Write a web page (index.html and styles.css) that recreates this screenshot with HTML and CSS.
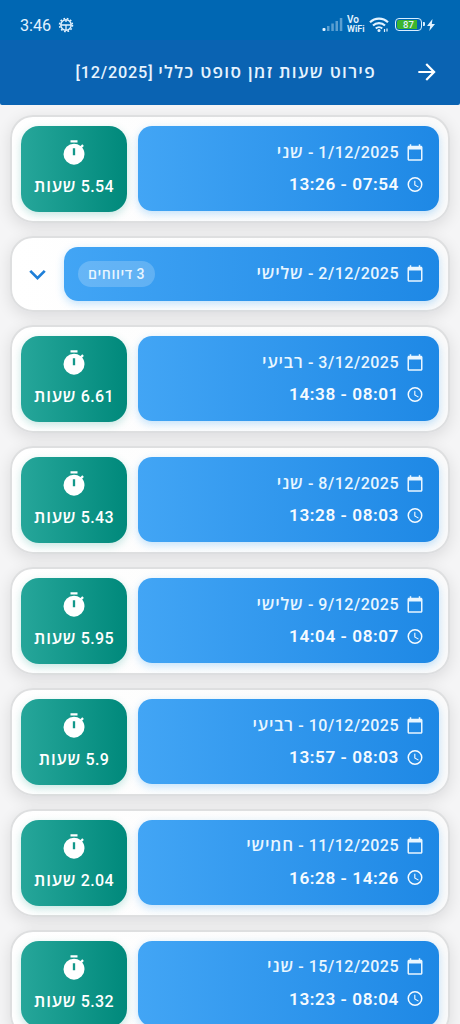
FILE: index.html
```html
<!DOCTYPE html>
<html lang="he" dir="rtl">
<head>
<meta charset="utf-8">
<title>פירוט שעות</title>
<link rel="stylesheet" href="styles.css">
</head>
<body>
<svg class="defs" width="0" height="0" aria-hidden="true">
  <symbol id="calendar" viewBox="0 0 24 24"><path fill="currentColor" d="M20 3h-1V1h-2v2H7V1H5v2H4c-1.100 0-2 .9-2 2v16c0 1.100.9 2 2 2h16c1.100 0 2-.9 2-2V5c0-1.100-.9-2-2-2zm0 18H4V8h16v13z"/></symbol>
  <symbol id="clock" viewBox="0 0 24 24"><path fill="currentColor" d="M12 2a10 10 0 1 0 0 20 10 10 0 0 0 0-20zm0 18a8 8 0 1 1 0-16 8 8 0 0 1 0 16zm.5-13H11v6l5.250 3.150.75-1.230-4.500-2.670z"/></symbol>
  <symbol id="timer" viewBox="0 0 24 24"><path fill="currentColor" d="M15 1H9v2h6V1zm4.030 6.390 1.420-1.420c-.43-.51-.9-.99-1.410-1.410l-1.420 1.420A8.960 8.960 0 0 0 12 4a9 9 0 1 0 9 9c0-2.120-.74-4.070-1.970-5.610zM13 14h-2V8h2v6z"/></symbol>
</svg>

<header class="top">
  <div class="status" dir="ltr">
    <span class="status-time">3:46</span>
    <svg class="gear" viewBox="0 0 16 16" fill="none" stroke="currentColor"><circle cx="8" cy="8" r="5.200" stroke-width="1.500"/><circle cx="8" cy="8" r="6.500" stroke-width="1.500" stroke-dasharray="1.700 1.703"/><path d="M3 8h10M8 8v5M8 3v2" stroke-width="1.300"/></svg>
    <span class="spacer"></span>
    <svg class="signal" viewBox="0 0 21 15" fill="currentColor"><rect x="0.500" y="11" width="3" height="3" rx="1"/><g opacity=".4"><rect x="5" y="9" width="2.500" height="5"/><rect x="9.300" y="6.500" width="2.500" height="7.500"/><rect x="13.500" y="4" width="2.500" height="10"/><rect x="17.800" y="1" width="2.500" height="13"/></g></svg>
    <span class="vowifi"><span>Vo</span><span>WiFi</span></span>
    <svg class="wifi" viewBox="0 0 20 16" fill="none" stroke="currentColor" stroke-width="2.100"><path d="M1 5.300a12.800 12.800 0 0 1 18 0M4 8.600a8.500 8.500 0 0 1 12 0M6.800 11.500a4.600 4.600 0 0 1 6.400 0"/><circle cx="10" cy="13.500" r="1.500" fill="currentColor" stroke="none"/><path d="M15.500 12v3M18 11.500v3" stroke-width="1.200"/></svg>
    <span class="battery"><span class="battery-level">87</span></span>
    <svg class="bolt" viewBox="0 0 8 12" fill="currentColor"><path d="M5.500 0 0 7h3.200L2.300 12 8 5H4.800z"/></svg>
  </div>
  <div class="appbar">
    <svg class="back" viewBox="0 0 24 24" fill="currentColor"><path d="m12 4-1.410 1.410L16.170 11H4v2h12.170l-5.580 5.590L12 20l8-8z"/></svg>
    <h1 class="title"><span class="he">פירוט שעות זמן סופט כללי</span> [12/2025]</h1>
  </div>
</header>

<main class="list">
  <article class="card">
    <div class="shift"><div class="row date"><svg class="icon"><use href="#calendar"/></svg><span>1/12/2025 - <span class="he">שני</span></span></div><div class="row hours"><svg class="icon"><use href="#clock"/></svg><span>07:54 - 13:26</span></div></div>
    <div class="total"><svg class="timer"><use href="#timer"/></svg><span>5.54 <span class="he">שעות</span></span></div>
  </article>
  <article class="card group">
    <div class="shift"><div class="row date"><svg class="icon"><use href="#calendar"/></svg><span>2/12/2025 - <span class="he">שלישי</span></span></div><span class="badge">3 <span class="he">דיווחים</span></span></div>
    <svg class="chevron" viewBox="0 0 24 24" fill="none" stroke="currentColor" stroke-width="2.300"><path d="m6 9 6 6 6-6"/></svg>
  </article>
  <article class="card">
    <div class="shift"><div class="row date"><svg class="icon"><use href="#calendar"/></svg><span>3/12/2025 - <span class="he">רביעי</span></span></div><div class="row hours"><svg class="icon"><use href="#clock"/></svg><span>08:01 - 14:38</span></div></div>
    <div class="total"><svg class="timer"><use href="#timer"/></svg><span>6.61 <span class="he">שעות</span></span></div>
  </article>
  <article class="card">
    <div class="shift"><div class="row date"><svg class="icon"><use href="#calendar"/></svg><span>8/12/2025 - <span class="he">שני</span></span></div><div class="row hours"><svg class="icon"><use href="#clock"/></svg><span>08:03 - 13:28</span></div></div>
    <div class="total"><svg class="timer"><use href="#timer"/></svg><span>5.43 <span class="he">שעות</span></span></div>
  </article>
  <article class="card">
    <div class="shift"><div class="row date"><svg class="icon"><use href="#calendar"/></svg><span>9/12/2025 - <span class="he">שלישי</span></span></div><div class="row hours"><svg class="icon"><use href="#clock"/></svg><span>08:07 - 14:04</span></div></div>
    <div class="total"><svg class="timer"><use href="#timer"/></svg><span>5.95 <span class="he">שעות</span></span></div>
  </article>
  <article class="card">
    <div class="shift"><div class="row date"><svg class="icon"><use href="#calendar"/></svg><span>10/12/2025 - <span class="he">רביעי</span></span></div><div class="row hours"><svg class="icon"><use href="#clock"/></svg><span>08:03 - 13:57</span></div></div>
    <div class="total"><svg class="timer"><use href="#timer"/></svg><span>5.9 <span class="he">שעות</span></span></div>
  </article>
  <article class="card">
    <div class="shift"><div class="row date"><svg class="icon"><use href="#calendar"/></svg><span>11/12/2025 - <span class="he">חמישי</span></span></div><div class="row hours"><svg class="icon"><use href="#clock"/></svg><span>14:26 - 16:28</span></div></div>
    <div class="total"><svg class="timer"><use href="#timer"/></svg><span>2.04 <span class="he">שעות</span></span></div>
  </article>
  <article class="card">
    <div class="shift"><div class="row date"><svg class="icon"><use href="#calendar"/></svg><span>15/12/2025 - <span class="he">שני</span></span></div><div class="row hours"><svg class="icon"><use href="#clock"/></svg><span>08:04 - 13:23</span></div></div>
    <div class="total"><svg class="timer"><use href="#timer"/></svg><span>5.32 <span class="he">שעות</span></span></div>
  </article>
</main>
</body>
</html>
```
FILE: styles.css
```css
* { box-sizing: border-box; }
html, body { height: 100%; }
body {
  margin: 0;
  display: flex;
  flex-direction: column;
  overflow: hidden;
  background: #f5f5f6;
  font-family: Roboto, "Open Sans", "Noto Sans", sans-serif;
  color: #fff;
}
svg { display: block; flex: none; }
.defs { position: absolute; }
.he { font-family: "Open Sans", sans-serif; font-size: 1.06em; font-weight: 600; letter-spacing: .8px; line-height: 1; }

.top { flex: none; height: 105px; background: #0a63b2; border-radius: 0 0 2px 2px; }
.status {
  height: 40px;
  padding: 9px 25px 0 20px;
  display: flex;
  align-items: center;
  background: #0067b3;
  color: #e3f3ff;
}
.status-time { font-size: 16.200px; padding-top: 1px; }
.gear { width: 16px; height: 16px; margin-left: 7px; }
.spacer { flex: 1; }
.signal { width: 21px; height: 15px; margin-right: 4px; }
.vowifi { display: flex; flex-direction: column; width: 18px; font-size: 9px; line-height: 8.500px; font-weight: 600; }
.vowifi span:first-child { font-size: 10px; }
.wifi { width: 20px; height: 16px; margin-left: 4px; }
.battery {
  position: relative;
  width: 27px;
  height: 13px;
  margin-left: 6px;
  padding: 1px;
  border: 1.500px solid #d9efff;
  border-radius: 4px;
}
.battery::after { content: ""; position: absolute; right: -4px; top: 3px; width: 2px; height: 4px; background: #d9efff; border-radius: 0 1px 1px 0; }
.battery-level { display: block; height: 9px; font-size: 9.500px; line-height: 9px; font-weight: 500; text-align: center; background: linear-gradient(90deg, #3cb52e 86%, transparent 86%); border-radius: 2px; }
.bolt { width: 8px; height: 12px; margin-left: 5px; }

.appbar { height: 65px; padding: 0 20px; display: flex; align-items: center; }
.back { width: 26px; height: 26px; margin-bottom: 1px; }
.title { margin: 0; padding: 1px 38px 0 0; font-size: 16.300px; line-height: 24px; font-weight: 500; letter-spacing: .8px; white-space: nowrap; color: #e6f4ff; }
.title .he { letter-spacing: 1.300px; }

.list {
  flex: 1;
  min-height: 0;
  padding: 10px 10px 0;
  display: flex;
  flex-direction: column;
  gap: 12.900px;
  overflow: hidden;
}
.card {
  flex: none;
  height: 108px;
  padding: 9px 9px 8px;
  display: flex;
  gap: 11px;
  border: 2px solid #dedfe0;
  border-radius: 23px;
  background: linear-gradient(90deg, #fff, #fafafa);
  box-shadow: 0 4px 16px rgba(0, 0, 20, .11);
}
.shift {
  flex: 1;
  height: 85px;
  padding: 14px 15px 0 0;
  display: flex;
  flex-direction: column;
  gap: 8px;
  border-radius: 14px;
  background: linear-gradient(90deg, #42a5f5, #1e88e5);
  box-shadow: 0 3px 9px rgba(33, 150, 243, .27);
}
.row { display: flex; align-items: center; gap: 7px; height: 24px; white-space: nowrap; color: #e9f6ff; }
.icon { width: 18px; height: 19px; }
.date { font-size: 16px; font-weight: 500; letter-spacing: .5px; }
.hours { font-size: 17.200px; font-weight: 600; letter-spacing: .55px; color: #f6fbff; }
.total {
  width: 106px;
  height: 86px;
  padding-top: 13px;
  display: flex;
  flex-direction: column;
  align-items: center;
  gap: 8px;
  border-radius: 18px;
  background: linear-gradient(90deg, #26a69a, #00897b);
  box-shadow: 0 3px 9px rgba(0, 150, 136, .23);
  font-size: 16px;
  line-height: 24px;
  font-weight: 500;
  letter-spacing: .4px;
  white-space: nowrap;
}
.timer { width: 28px; height: 28px; }

.group { height: 76.600px; gap: 12px; }
.group .shift { height: 54px; padding: 0 15px 0 14px; flex-direction: row; align-items: center; justify-content: space-between; }
.badge { height: 26px; padding: 0 10px; border-radius: 13px; background: rgba(255, 255, 255, .2); font-size: 14px; line-height: 26px; font-weight: 500; letter-spacing: .2px; white-space: nowrap; color: #e9f6ff; }
.badge .he { font-size: 1em; letter-spacing: .6px; }
.chevron { width: 29px; height: 29px; margin: 13px 0 0 2px; color: #1e7fd8; }
```
